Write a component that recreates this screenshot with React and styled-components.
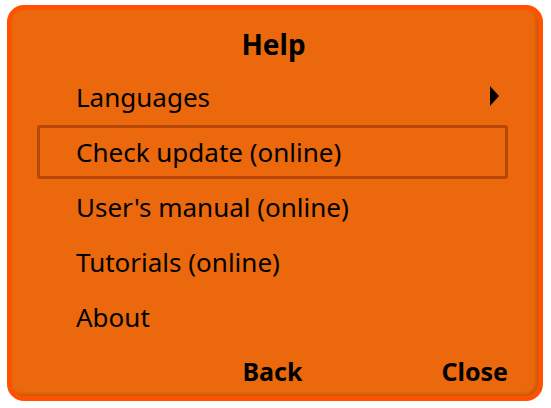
import React from "react";
import styled, { createGlobalStyle } from "styled-components";

const Global = createGlobalStyle`
  html, body { margin: 0; padding: 0; background: #ffffff; }
  body { font-family: "Noto Sans", "Open Sans", sans-serif; }
`;

const Page = styled.div`
  width: 551px;
  height: 408px;
  padding: 5px 8px 7px 7px;
  box-sizing: border-box;
  display: flex;
`;

const Panel = styled.div`
  flex: 1;
  box-sizing: border-box;
  border: 5px solid #ff5200;
  border-radius: 17px;
  background: #eb690c;
  box-shadow: inset -2px -2px 3px rgba(90, 30, 0, 0.25);
  display: flex;
  flex-direction: column;
  padding: 0 30px 0 25px;
  color: #000;
`;

const Title = styled.div`
  height: 60px;
  display: flex;
  align-items: center;
  justify-content: center;
  font-weight: 700;
  font-size: 28px;
  padding-left: 2px;
  padding-top: 7px;
  box-sizing: border-box;
`;

const List = styled.div`
  display: flex;
  flex-direction: column;
  gap: 1px;
`;

const Row = styled.div`
  height: 54px;
  box-sizing: border-box;
  display: flex;
  align-items: center;
  justify-content: space-between;
  padding: 0 6px 0 36px;
  font-size: 26px;
  border: 3px solid ${(p) => (p.$selected ? "#b74708" : "transparent")};
  border-radius: 3px;
`;

const Arrow = styled.span`
  width: 0;
  height: 0;
  border-top: 10px solid transparent;
  border-bottom: 10px solid transparent;
  border-left: 9px solid #000;
  margin-bottom: 2px;
`;

const Footer = styled.div`
  flex: 1;
  display: grid;
  grid-template-columns: 1fr auto 1fr;
  align-items: center;
  font-weight: 700;
  font-size: 25px;
  padding-top: 2px;
`;

const FooterButton = styled.div`
  justify-self: ${(p) => p.$align || "center"};
`;

const items = [
  { label: "Languages", arrow: true },
  { label: "Check update (online)", selected: true },
  { label: "User's manual (online)" },
  { label: "Tutorials (online)" },
  { label: "About" },
];

export default function App() {
  return (
    <>
      <Global />
      <Page>
        <Panel>
          <Title>Help</Title>
          <List>
            {items.map((it) => (
              <Row key={it.label} $selected={it.selected}>
                <span>{it.label}</span>
                {it.arrow && <Arrow />}
              </Row>
            ))}
          </List>
          <Footer>
            <span />
            <FooterButton>Back</FooterButton>
            <FooterButton $align="end">Close</FooterButton>
          </Footer>
        </Panel>
      </Page>
    </>
  );
}
